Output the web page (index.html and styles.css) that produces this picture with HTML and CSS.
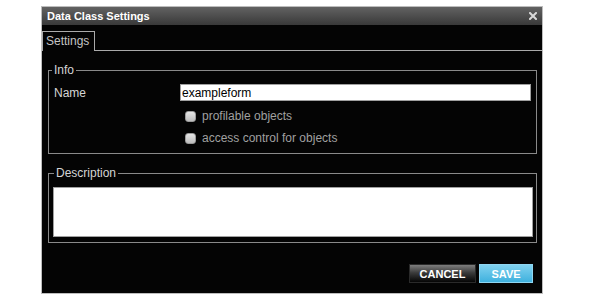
FILE: index.html
```html
<!DOCTYPE html>
<html>
<head>
<meta charset="utf-8">
<link rel="stylesheet" href="styles.css">
</head>
<body>
<div class="dialog">
  <div class="titlebar">
    <span class="title">Data Class Settings</span>
    <svg class="close" width="8" height="8" viewBox="0 0 8 8"><path d="M1 1L7 7M7 1L1 7" stroke="#d8d8d8" stroke-width="2" stroke-linecap="square"/></svg>
  </div>
  <div class="body">
    <div class="tabs">
      <div class="tab">Settings</div>
      <div class="tab-fill"></div>
    </div>
    <div class="panel">
      <fieldset class="group info">
        <legend class="legend">Info</legend>
        <div class="name-row">
          <label class="field-label">Name</label>
          <input class="text-input" type="text" value="exampleform">
        </div>
        <div class="check-row first">
          <span class="check"></span><span class="check-label">profilable objects</span>
        </div>
        <div class="check-row second">
          <span class="check"></span><span class="check-label">access control for objects</span>
        </div>
      </fieldset>
      <fieldset class="group desc">
        <legend class="legend">Description</legend>
        <textarea class="desc-input"></textarea>
      </fieldset>
      <div class="actions">
        <button class="btn cancel">CANCEL</button>
        <button class="btn save">SAVE</button>
      </div>
    </div>
  </div>
</div>
</body>
</html>
```
FILE: styles.css
```css
html, body {
  margin: 0;
  padding: 0;
  background: #ffffff;
  font-family: "Liberation Sans", Arial, sans-serif;
  font-size: 12px;
}

.dialog {
  margin: 6px 0 0 41px;
  width: 502px;
  box-sizing: border-box;
  border: 1px solid #bdbdbd;
  background: #040404;
}

.titlebar {
  height: 18px;
  display: flex;
  align-items: center;
  justify-content: space-between;
  padding: 0 5px 0 5px;
  background: linear-gradient(#626262, #393939);
}

.title {
  color: #ffffff;
  font-weight: bold;
  font-size: 11px;
  line-height: 18px;
}

.close {
  display: block;
}

.tabs {
  display: flex;
  align-items: flex-end;
  padding-top: 6px;
}

.tab {
  box-sizing: border-box;
  width: 53px;
  height: 20px;
  border: 1px solid #aaaaaa;
  border-bottom: none;
  color: #c4c4c4;
  line-height: 19px;
  padding-left: 3px;
}

.tab-fill {
  flex: 1;
  box-sizing: border-box;
  height: 20px;
  border-bottom: 1px solid #aaaaaa;
}

.panel {
  padding: 0 5px 10px 6px;
}

.group {
  box-sizing: border-box;
  width: 489px;
  margin: 12px 0 0 0;
  padding: 0 0 0 5px;
  border: 1px solid #8a8a8a;
  min-width: 0;
}

.legend {
  padding: 0 2px;
  margin-left: -2px;
  line-height: 14px;
  color: #d4d4d4;
}

.info {
  padding-bottom: 9px;
}

.name-row {
  display: flex;
  align-items: center;
  margin-top: 7px;
  height: 17px;
}

.field-label {
  width: 126px;
  color: #d6d6d6;
}

.text-input {
  box-sizing: border-box;
  width: 351px;
  height: 17px;
  margin: 0;
  border: 1px solid #a0a0a0;
  padding: 0 1px;
  font-family: "Liberation Sans", Arial, sans-serif;
  font-size: 12px;
  color: #000000;
  background: #ffffff;
  outline: none;
}

.check-row {
  display: flex;
  align-items: center;
  height: 11px;
  margin-left: 131px;
}

.check-row.first {
  margin-top: 10px;
}

.check-row.second {
  margin-top: 11px;
}

.check {
  box-sizing: border-box;
  width: 11px;
  height: 11px;
  border: 1px solid #9a9a9a;
  border-radius: 3px;
  background: linear-gradient(#e6e6e6, #bdbdbd);
}

.check-label {
  margin-left: 6px;
  color: #a0a0a0;
  line-height: 11px;
}

.desc {
  padding-left: 4px;
}

.desc .legend {
  margin-left: 1px;
}

.desc-input {
  display: block;
  box-sizing: border-box;
  width: 480px;
  height: 50px;
  margin: 7px 0 5px 0;
  border: 1px solid #a0a0a0;
  background: #ffffff;
  resize: none;
  outline: none;
  padding: 2px;
}

.actions {
  display: flex;
  justify-content: flex-end;
  gap: 3px;
  margin-top: 21px;
  padding-right: 4px;
}

.btn {
  box-sizing: border-box;
  height: 19px;
  margin: 0;
  padding: 0;
  font-family: "Liberation Sans", Arial, sans-serif;
  font-weight: bold;
  font-size: 11px;
  color: #ffffff;
  cursor: pointer;
}

.cancel {
  width: 67px;
  border: 1px solid #2a2a2a;
  background: linear-gradient(#7d7d7d, #3c3c3c 45%, #050505);
}

.save {
  width: 54px;
  border: 1px solid #8fd6f2;
  background: linear-gradient(#80d1ef, #3fb1de);
}
```
